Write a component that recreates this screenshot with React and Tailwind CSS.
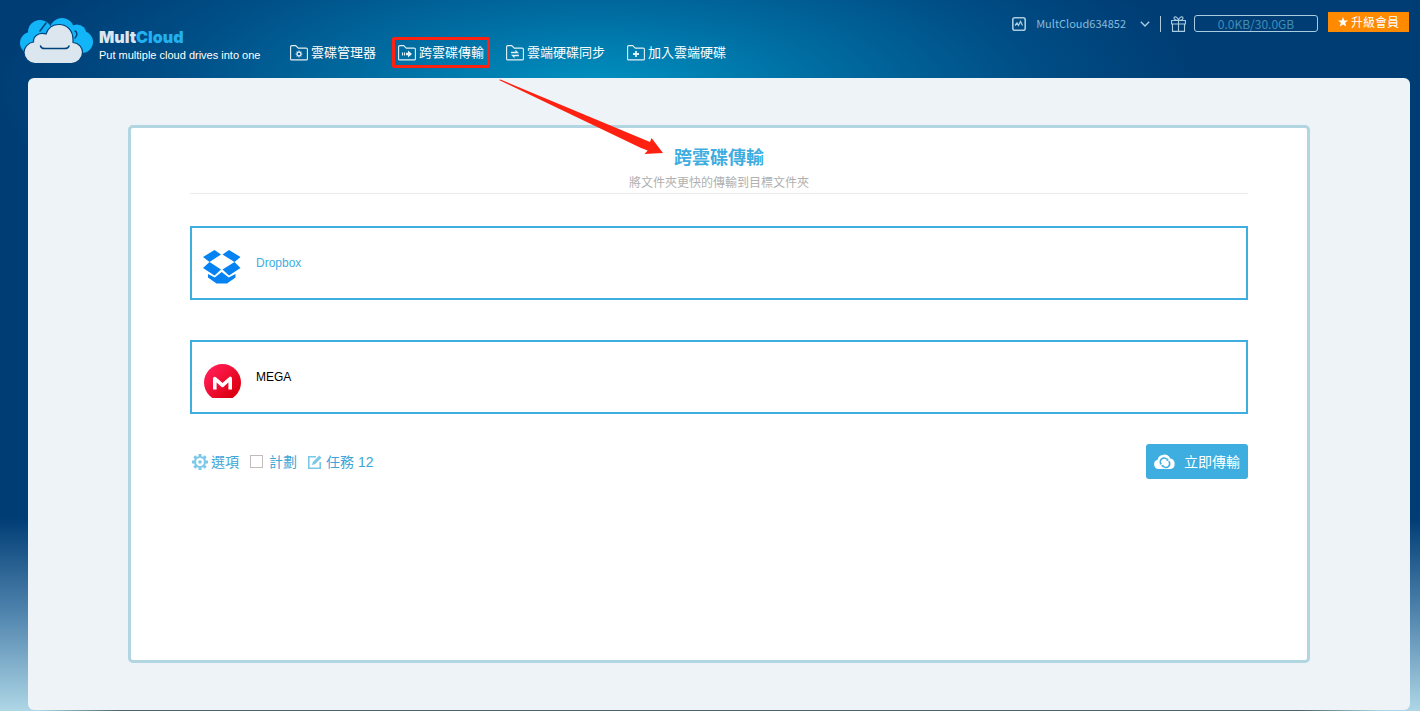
import { useState } from "react";
import clsx from "clsx";

const FolderIcon = ({ children }) => (
  <svg
    className="w-[18px] h-4 shrink-0 text-[#e3f1f8]"
    viewBox="0 0 18 16"
    fill="none"
    stroke="currentColor"
    strokeWidth="1.1"
  >
    <path d="M0.6 13.900V1.900a1.300 1.300 0 0 1 1.300-1.300h3.800l2.600 2.500h7.800a1.300 1.300 0 0 1 1.300 1.300v9.500a1 1 0 0 1-1 1H1.600a1 1 0 0 1-1-1z" />
    {children}
  </svg>
);

const navItems = [
  {
    label: "雲碟管理器",
    glyph: (
      <>
        <circle cx="9" cy="9" r="1.9" strokeWidth="1.1" />
        <path
          strokeWidth="1.1"
          d="M9 5.6v1.5M9 10.9v1.5M5.6 9h1.5M10.9 9h1.5M6.6 6.6l1 1M10.4 10.4l1 1M11.4 6.6l-1 1M7.6 10.4l-1 1"
        />
      </>
    ),
  },
  {
    label: "跨雲碟傳輸",
    glyph: (
      <>
        <path d="M4.5 7.5v3M6.5 7.5v3" />
        <path fill="currentColor" stroke="none" d="M8 7.8h2V5.4L14 9l-4 3.600v-2.400H8z" />
      </>
    ),
  },
  {
    label: "雲端硬碟同步",
    glyph: (
      <path
        fill="currentColor"
        stroke="none"
        d="M5 6.700h4.500V4.800L13 8.200H5zM13 9.800H5l3.500 3.400v-1.900H13z"
      />
    ),
  },
  {
    label: "加入雲端硬碟",
    glyph: <path strokeWidth="1.8" d="M9 6v6M6 9h6" />,
  },
];

const Logo = () => (
  <svg className="w-[74px] h-12 shrink-0" viewBox="0 0 74 48">
    <g fill="#12b5f7">
      <circle cx="20" cy="15" r="12" />
      <circle cx="11" cy="26" r="11" />
      <circle cx="42" cy="13" r="12" />
      <circle cx="57" cy="17" r="9.5" />
      <circle cx="62" cy="25" r="11" />
      <path d="M12 14h48v20l-6 2H14z" />
    </g>
    <path
      d="M20 14l6-8M55 14c2 1 3 4 0 7"
      fill="none"
      stroke="#00437c"
      strokeWidth="1.5"
      strokeLinecap="round"
    />
    <path
      d="M15 46.5a11 11 0 0 1-11-11c0-5 4-10 9.5-10.500C13 19 19 15 26 17c2-6 7-9.500 13-9.500 8 0 14 6 14 15v3c6 .5 9.500 5 9.500 10a11 11 0 0 1-11 11z"
      fill="#dbe6ee"
      stroke="#00437c"
      strokeWidth="1.2"
    />
    <path
      d="M20.500 29c.5 2 2 2.500 4 2.500h20c2.500 0 4-.5 4.500-2.500"
      fill="none"
      stroke="#00437c"
      strokeWidth="1.5"
      strokeLinecap="round"
    />
  </svg>
);

const DropboxIcon = () => (
  <svg className="w-[38px] h-[34px] shrink-0" viewBox="0 0 38 34" fill="#0583f2">
    <path d="M11.500 0L18 4.500 6.500 12 0 7zM26 0l11.500 7L31.500 12 19.500 4.500z" />
    <path d="M6.500 12L18 19.500 11.500 25.500 0 18zM31.500 12L37.500 18 26 25.500 19.500 19.500z" />
    <path d="M5 24l6.800 3.600L18.700 22l7 5.600L32.500 24v3.600L24 33.500H13.500L5 27.600z" />
  </svg>
);

const MegaIcon = () => (
  <svg className="w-[38px] h-[34px] shrink-0" viewBox="0 0 38 34">
    <defs>
      <linearGradient id="mega" x1="0" y1="0" x2="1" y2="1">
        <stop offset="0.2" stopColor="#ff1a4f" />
        <stop offset="0.8" stopColor="#dc0012" />
      </linearGradient>
    </defs>
    <circle cx="19.500" cy="18.500" r="18.500" fill="url(#mega)" />
    <path
      d="M11.800 25.500V14.500l7.700 6.800 7.700-6.800V25.500"
      fill="none"
      stroke="#fff"
      strokeWidth="3.600"
      strokeLinejoin="round"
    />
  </svg>
);

const GearIcon = () => (
  <svg
    className="w-4 h-4 shrink-0 text-[#7cc8e8]"
    viewBox="0 0 16 16"
    fill="none"
    stroke="currentColor"
  >
    <circle cx="8" cy="8" r="5" strokeWidth="2.200" />
    <circle cx="8" cy="8" r="1.800" fill="currentColor" stroke="none" />
    <path
      strokeWidth="3"
      d="M8 0v2.500M8 13.500V16M0 8h2.500M13.500 8H16M2.300 2.300l1.800 1.800M11.900 11.900l1.800 1.800M13.700 2.300l-1.800 1.800M4.100 11.900l-1.800 1.800"
    />
  </svg>
);

const TaskIcon = () => (
  <svg
    className="w-3.5 h-3.5 shrink-0 text-[#7cc8e8]"
    viewBox="0 0 14 14"
    fill="none"
    stroke="currentColor"
  >
    <path strokeWidth="1.600" d="M8 1.800H.8v11.400h11.400V7" />
    <path fill="currentColor" stroke="none" d="M4 10l.8-3L11.300.5l2.200 2.200L7 9.200z" />
  </svg>
);

const CloudSyncIcon = () => (
  <svg className="w-[22px] h-[15px] shrink-0" viewBox="0 0 22 15">
    <path
      fill="#fff"
      d="M5 15a4.700 4.700 0 0 1-1.500-9.200A6.800 6.800 0 0 1 16.300 4.600 5.300 5.300 0 0 1 16.500 15z"
    />
    <g fill="none" stroke="#3eaddf" strokeWidth="1.600">
      <path d="M7.300 10.400A3.700 3.700 0 0 1 12.800 5.300" />
      <path d="M14.700 7.200A3.700 3.700 0 0 1 9.200 12.300" />
    </g>
    <path fill="#3eaddf" d="M12 6.900l2.700-.4-.8-2.400zM10 10.800l-2.700.4.800 2.400z" />
  </svg>
);

const Header = ({ active, onSelect }) => (
  <header className="relative z-10 h-[78px] pl-5 pr-[11px] flex items-start">
    <a href="#home" className="flex items-start pt-[17px] w-[264px] shrink-0">
      <Logo />
      <span className="pl-[5px] pt-2">
        <span className="block font-['Inter'] font-black text-base leading-6 text-[#dbe6ee]">
          Mult<span className="text-[#22b1f0]">Cloud</span>
        </span>
        <span className="block text-[11px] leading-3 text-white whitespace-nowrap">
          Put multiple cloud drives into one
        </span>
      </span>
    </a>

    <nav className="flex gap-2.5 pt-[37px] shrink-0">
      {navItems.map((item) => (
        <a
          key={item.label}
          href="#"
          onClick={() => onSelect(item.label)}
          className={clsx(
            "relative h-[31px] px-[3px] border-[3px] rounded-xs flex items-center gap-[3px] text-[13px] leading-none text-white whitespace-nowrap",
            item.label === active ? "border-[#fe2011]" : "border-transparent"
          )}
        >
          <FolderIcon>{item.glyph}</FolderIcon>
          {item.label}
          {item.label === active && (
            <svg
              className="absolute left-[104px] top-[39px] w-[164px] h-[76px] pointer-events-none"
              viewBox="0 0 164 76"
              fill="#fe2011"
            >
              <path d="M0 1l1.500-.5L151 63l1.500-4L164 74l-18.500 1 3.200-3.500L142 69z" />
            </svg>
          )}
        </a>
      ))}
    </nav>

    <div className="ml-auto pt-3 flex items-start font-['Noto_Sans_CJK_TC',sans-serif] text-xs text-[#85bcdc]">
      <div className="h-[23px] flex items-center">
        <svg
          className="w-3.5 h-3.5"
          viewBox="0 0 14 14"
          fill="none"
          stroke="#a9cce0"
          strokeWidth="1.600"
        >
          <rect x="0.8" y="0.8" width="12.400" height="12.400" rx="2" />
          <path strokeWidth="1.300" d="M3 8.500l2-2.500 1.500 2.500L8.500 4.500l2 4" />
        </svg>
        <button className="ml-2.5 flex items-center text-[11px]">
          MultCloud634852
          <svg
            className="ml-3.5 w-2.5 h-1.5"
            viewBox="0 0 10 6"
            fill="none"
            stroke="#a9cce0"
            strokeWidth="1.400"
          >
            <path d="M.8.8L5 5 9.200.8" />
          </svg>
        </button>
        <span className="ml-2.5 w-px h-4 bg-[#a9cce0]" />
        <svg
          className="ml-2.5 w-[15px] h-4"
          viewBox="0 0 15 16"
          fill="none"
          stroke="#a9cce0"
          strokeWidth="1.100"
        >
          <path d="M.6 4.500h13.800v3.500H.6zM1.500 8v7.400h12V8M7.500 4.500v11M7.500 4.500C5 4.500 3 3.500 3 2c0-2 4-1.500 4.500 2.500C8 .5 12 0 12 2c0 1.500-2 2.500-4.500 2.500" />
        </svg>
        <span className="ml-2 w-[124px] h-[17px] border border-[#a9cce0] rounded-[3px] flex items-center justify-center leading-none text-[#438eb4]">
          0.0KB/30.0GB
        </span>
      </div>
      <button className="ml-2.5 w-[81px] h-5 bg-[#ff8a00] text-white flex items-center justify-center gap-[3px] leading-none">
        <svg className="w-2.5 h-2.5" viewBox="0 0 10 10" fill="currentColor">
          <path d="M5 0l1.300 3.500H10L7.100 5.800 8.200 9.600 5 7.400 1.800 9.600l1.100-3.800L0 3.500h3.700z" />
        </svg>
        升級會員
      </button>
    </div>
  </header>
);

const DriveBox = ({ icon, name, className }) => (
  <button className="w-full h-[74px] pl-[11px] border-2 border-[#3eaddf] flex items-center text-left">
    <span className="pt-2">{icon}</span>
    <span className={clsx("ml-[15px] text-xs", className)}>{name}</span>
  </button>
);

const App = () => {
  const [active, setActive] = useState("跨雲碟傳輸");
  const [scheduled, setScheduled] = useState(false);

  return (
    <div className="min-h-screen flex flex-col font-['Liberation_Sans','Noto_Sans_CJK_TC',sans-serif] bg-[radial-gradient(ellipse_600px_200px_at_42%_90px,#0093c2_0%,#006ba0_40%,#004c84_75%,transparent_100%),linear-gradient(to_bottom,#003d75_0px,#003d75_518px,#4d82ac_610px,#aed6e6_711px)]">
      <Header active={active} onSelect={setActive} />

      <main className="grow flex flex-col ml-7 mr-2.5 px-[100px] py-[47px] bg-[#edf3f6] rounded-md">
        <section className="grow px-[59px] pt-4 bg-white border-[3px] border-[#b1d5e1] rounded-[5px]">
          <div className="h-[50px] pt-px border-b border-[#ebebeb] text-center">
            <h1 className="text-[18px] leading-[26px] font-bold text-[#3eaddf]">
              跨雲碟傳輸
            </h1>
            <p className="text-xs leading-6 text-[#b0b0b0]">
              將文件夾更快的傳輸到目標文件夾
            </p>
          </div>

          <div className="pt-8 flex flex-col gap-10">
            <DriveBox
              icon={<DropboxIcon />}
              name="Dropbox"
              className="text-[#3eaddf]"
            />
            <DriveBox icon={<MegaIcon />} name="MEGA" className="text-black" />
          </div>

          <div className="mt-[30px] flex items-center justify-between">
            <div className="pl-0.5 flex items-center text-sm leading-none text-[#3ea5d6]">
              <button className="flex items-center gap-[3px]">
                <GearIcon />
                選項
              </button>
              <label className="ml-[11px] flex items-center gap-1.5">
                <input
                  type="checkbox"
                  checked={scheduled}
                  onChange={(e) => setScheduled(e.target.checked)}
                  className="appearance-none w-[13px] h-[13px] border border-[#c4baba] bg-white checked:bg-[#3eaddf]"
                />
                計劃
              </label>
              <a href="#tasks" className="ml-[11px] flex items-center gap-1">
                <TaskIcon />
                任務 12
              </a>
            </div>
            <button className="w-[102px] h-[35px] bg-[#3eaddf] rounded-[3px] flex items-center justify-center gap-2 text-sm leading-none text-white">
              <CloudSyncIcon />
              立即傳輸
            </button>
          </div>
        </section>
      </main>
      <div className="h-px mx-10 bg-[linear-gradient(to_right,transparent,#4c6470_6%,#4c6470_94%,transparent)]" />
    </div>
  );
};

export default App;
